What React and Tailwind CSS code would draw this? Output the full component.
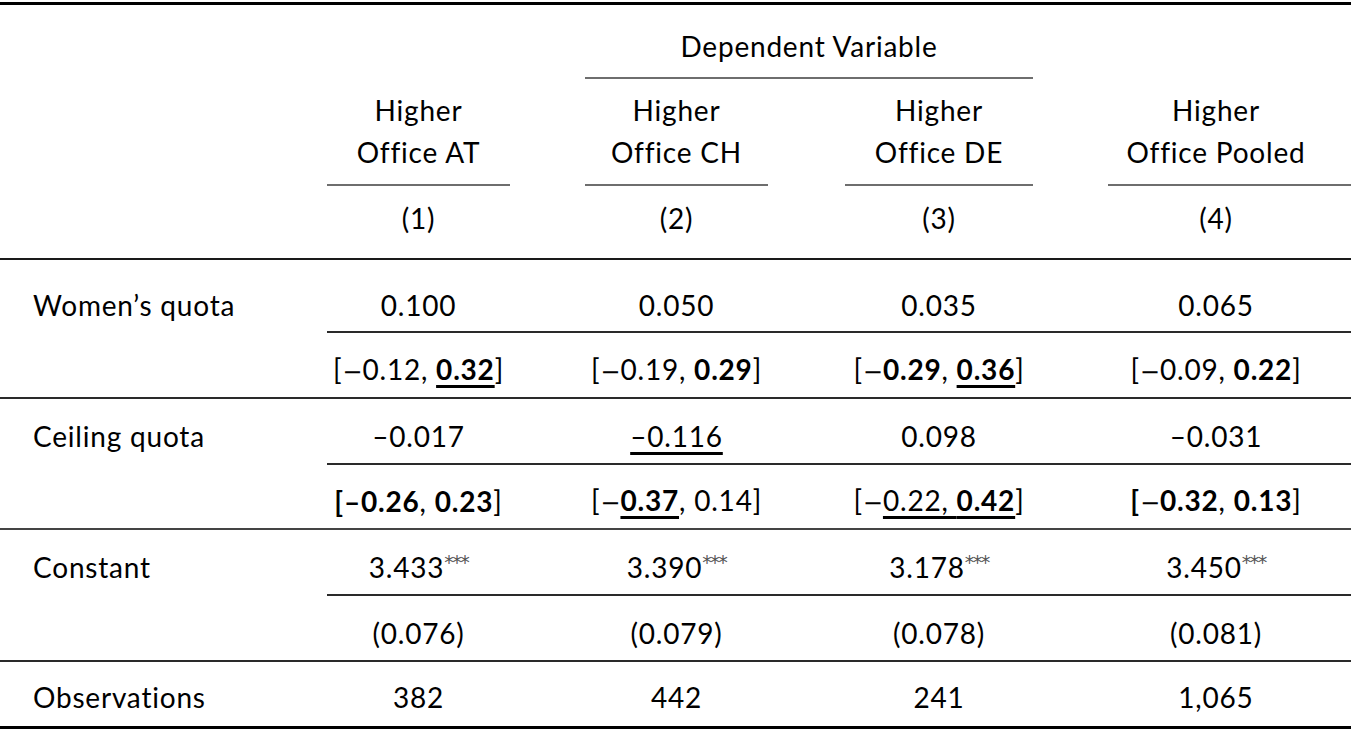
import React from "react";

const COLS = [
  "w-[183px]",
  "w-[183px] ml-[75px]",
  "w-[188px] ml-[77px]",
  "w-[243px] ml-[75px] pr-[27px]",
];

function Cells({ items }) {
  return (
    <>
      {items.map((c, i) => (
        <div key={i} className={`${COLS[i]} shrink-0 text-center whitespace-nowrap`}>
          {c}
        </div>
      ))}
    </>
  );
}

function Row({ label, items, h, pt }) {
  return (
    <div className={`flex items-center ${h} ${pt}`}>
      <div className="w-[327px] shrink-0 pl-[33px] whitespace-nowrap">{label}</div>
      <Cells items={items} />
    </div>
  );
}

const B = ({ children }) => <span className="font-bold">{children}</span>;
const U = ({ children }) => (
  <span className="underline decoration-[3px] underline-offset-[5px]">{children}</span>
);
const M = () => (
  <span
    className="tracking-normal text-[24px]"
    style={{ fontFamily: "'DejaVu Sans', sans-serif" }}
  >
    −
  </span>
);
const Star = () => (
  <sup
    className="text-[19px] font-normal text-[#555] top-[-0.45em] tracking-[-1.5px]"
    style={{ fontFamily: "'DejaVu Sans', sans-serif" }}
  >
    ***
  </sup>
);

export default function App() {
  const partial = <div className="ml-[327px] h-[2px] bg-[#2a2a2a]" />;
  const full = <div className="h-[2px] bg-[#2a2a2a]" />;
  return (
    <div
      className="w-[1351px] h-[730px] bg-white text-black text-[28px] leading-[30px] tracking-[0.8px] overflow-hidden"
      style={{ fontFamily: "Lato, 'Noto Sans', sans-serif" }}
    >
      <div className="h-[2px]" />
      <div className="h-[3px] bg-black" />
      <div className="h-[72px] pt-[10px] flex items-center">
        <div className="ml-[585px] w-[448px] text-center">Dependent Variable</div>
      </div>
      <div className="ml-[585px] w-[448px] h-[2px] bg-[#6e6e6e]" />
      <div className="flex h-[105px] pt-[10px] leading-[42px]">
        <div className="w-[327px] shrink-0" />
        <Cells
          items={[
            <>Higher<br />Office AT</>,
            <>Higher<br />Office CH</>,
            <>Higher<br />Office DE</>,
            <>Higher<br />Office Pooled</>,
          ]}
        />
      </div>
      <div className="flex h-[2px]">
        <div className="w-[327px] shrink-0" />
        <div className="w-[183px] bg-[#6e6e6e]" />
        <div className="w-[183px] ml-[75px] bg-[#6e6e6e]" />
        <div className="w-[188px] ml-[77px] bg-[#6e6e6e]" />
        <div className="w-[243px] ml-[75px] bg-[#6e6e6e]" />
      </div>
      <div className="flex items-center h-[72px] pb-[8px]">
        <div className="w-[327px] shrink-0" />
        <Cells items={["(1)", "(2)", "(3)", "(4)"]} />
      </div>
      <div className="h-[2px] bg-[#1a1a1a]" />

      <Row label="Women’s quota" h="h-[71px]" pt="pt-[19px]" items={["0.100", "0.050", "0.035", "0.065"]} />
      {partial}
      <Row
        label=""
        h="h-[64px]"
        pt="pt-[10px]"
        items={[
          <>[<M />0.12, <B><U>0.32</U></B>]</>,
          <>[<M />0.19, <B>0.29</B>]</>,
          <>[<M /><B>0.29</B>, <B><U>0.36</U></B>]</>,
          <>[<M />0.09, <B>0.22</B>]</>,
        ]}
      />
      {full}
      <Row
        label="Ceiling quota"
        h="h-[64px]"
        pt="pt-[10px]"
        items={["–0.017", <U>–0.116</U>, "0.098", "–0.031"]}
      />
      {partial}
      <Row
        label=""
        h="h-[63px]"
        pt="pt-[9px]"
        items={[
          <><B>[–0.26</B>, <B>0.23</B>]</>,
          <>[<M /><B><U>0.37</U></B>, 0.14]</>,
          <>[<M /><U>0.22, <B>0.42</B></U>]</>,
          <><B>[</B><M /><B>0.32</B>, <B>0.13</B>]</>,
        ]}
      />
      <div className="h-[2px] bg-[#444]" />
      <Row
        label="Constant"
        h="h-[64px]"
        pt="pt-[10px]"
        items={[
          <>3.433<Star /></>,
          <>3.390<Star /></>,
          <>3.178<Star /></>,
          <>3.450<Star /></>,
        ]}
      />
      {partial}
      <Row label="" h="h-[64px]" pt="pt-[10px]" items={["(0.076)", "(0.079)", "(0.078)", "(0.081)"]} />
      {full}
      <Row label="Observations" h="h-[64px]" pt="pt-[6px]" items={["382", "442", "241", "1,065"]} />
      <div className="h-[3px] bg-black" />
    </div>
  );
}
